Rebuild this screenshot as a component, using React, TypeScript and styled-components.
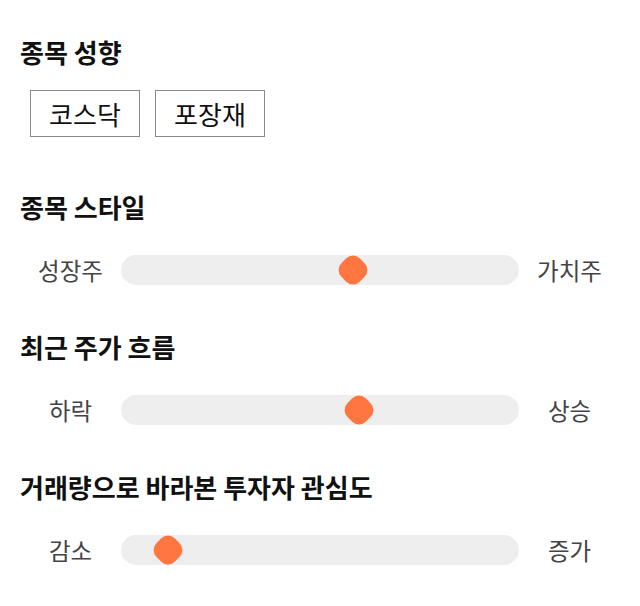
import React from "react";
import styled, { createGlobalStyle } from "styled-components";

const FONT = `"Noto Sans CJK KR", "Noto Sans", sans-serif`;

const GlobalStyle = createGlobalStyle`
  html, body {
    margin: 0;
    padding: 0;
    background: #ffffff;
  }
  body {
    font-family: ${FONT};
    color: #111111;
  }
`;

const Page = styled.div`
  width: 640px;
  box-sizing: border-box;
  padding: 34px 20px 0;
  display: flex;
  flex-direction: column;
`;

const Section = styled.section<{ $gap: number }>`
  display: flex;
  flex-direction: column;
  margin-top: ${(p) => p.$gap}px;
`;

const Heading = styled.h3`
  margin: 0;
  font-size: 26px;
  font-weight: 700;
  line-height: 35px;
  color: #111111;
`;

const ButtonGroup = styled.div`
  display: flex;
  gap: 15px;
  padding-left: 10px;
  margin-top: 21px;
`;

const TagButton = styled.button`
  box-sizing: border-box;
  width: 110px;
  height: 47px;
  padding: 5px 0;
  border: 1px solid #8a8a8a;
  border-radius: 0;
  background: #ffffff;
  font-family: ${FONT};
  font-size: 26px;
  line-height: 35px;
  color: #111111;
  cursor: pointer;
`;

const SliderRow = styled.div`
  display: grid;
  grid-template-columns: 101px 1fr 101px;
  align-items: center;
  margin-top: 31px;
`;

const SideLabel = styled.span`
  text-align: center;
  font-size: 23.5px;
  line-height: 30px;
  color: #444444;
`;

const Track = styled.div`
  position: relative;
  height: 30px;
  border-radius: 15px;
  background: #eeeeee;
`;

const Thumb = styled.div`
  position: absolute;
  top: 50%;
  width: 26px;
  height: 26px;
  border-radius: 9.5px;
  background: #ff7640;
  transform: translate(-50%, -50%) rotate(45deg);
`;

type SliderProps = { left: string; right: string; value: number };

const Slider = ({ left, right, value }: SliderProps) => (
  <SliderRow>
    <SideLabel>{left}</SideLabel>
    <Track>
      <Thumb style={{ left: `${value}%` }} />
    </Track>
    <SideLabel>{right}</SideLabel>
  </SliderRow>
);

const sliders = [
  { title: "종목 스타일", left: "성장주", right: "가치주", value: 58.4, gap: 52 },
  { title: "최근 주가 흐름", left: "하락", right: "상승", value: 59.8, gap: 44 },
  { title: "거래량으로 바라본 투자자 관심도", left: "감소", right: "증가", value: 11.8, gap: 44 },
];

export default function App() {
  return (
    <>
      <GlobalStyle />
      <Page>
        <Section $gap={0}>
          <Heading>종목 성향</Heading>
          <ButtonGroup>
            <TagButton>코스닥</TagButton>
            <TagButton>포장재</TagButton>
          </ButtonGroup>
        </Section>
        {sliders.map((s) => (
          <Section key={s.title} $gap={s.gap}>
            <Heading>{s.title}</Heading>
            <Slider left={s.left} right={s.right} value={s.value} />
          </Section>
        ))}
      </Page>
    </>
  );
}
